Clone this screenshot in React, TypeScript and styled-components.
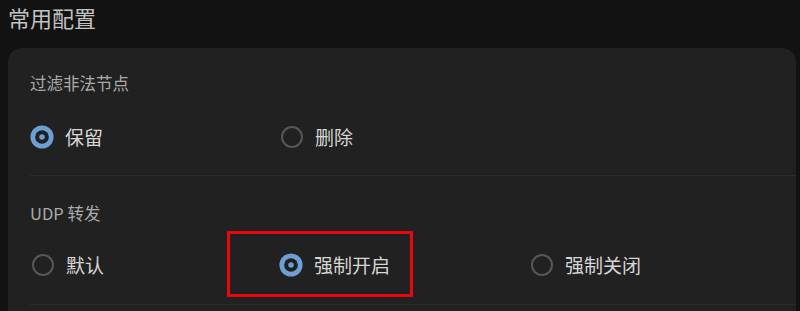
import React from "react";
import styled, { createGlobalStyle } from "styled-components";

const Global = createGlobalStyle`
  html, body { margin: 0; padding: 0; background: #121212; }
  body {
    font-family: "Noto Sans CJK SC", "Noto Sans", sans-serif;
    overflow: hidden;
  }
`;

const Page = styled.div`
  padding: 0 4px 0 8px;
  height: 311px;
  box-sizing: border-box;
`;

const Title = styled.h1`
  margin: 0;
  font-size: 22px;
  line-height: 35px;
  font-weight: 400;
  color: #c2c2c2;
`;

const Card = styled.div`
  margin-top: 13px;
  background: #212121;
  border-radius: 14px;
  padding-left: 22px;
  min-height: 300px;
`;

const Section = styled.section<{ $top: number; $gap: number; $bottom: number }>`
  padding: ${(p) => p.$top}px 0 ${(p) => p.$bottom}px;
  border-bottom: 1px solid #2c2c2c;
  display: flex;
  flex-direction: column;
  gap: ${(p) => p.$gap}px;
`;

const Label = styled.div`
  font-size: 16.5px;
  line-height: 24px;
  color: #ababab;
`;

const Options = styled.div`
  display: grid;
  grid-template-columns: repeat(3, 250px);
  height: 44px;
  align-items: center;
`;

const Option = styled.label<{ $shift?: number }>`
  position: relative;
  display: flex;
  align-items: center;
  gap: 11px;
  cursor: pointer;
  margin-left: ${(p) => p.$shift ?? 0}px;
`;

const RadioSlot = styled.span`
  width: 24px;
  height: 28px;
  display: flex;
  align-items: center;
  justify-content: center;
`;

const OptionText = styled.span`
  font-size: 19px;
  line-height: 28px;
  color: #d6d6d6;
`;

const Highlight = styled.span`
  position: absolute;
  left: -52px;
  top: -20px;
  width: 186px;
  height: 66px;
  box-sizing: border-box;
  border: 3px solid #e8080b;
  pointer-events: none;
`;

const RadioIcon: React.FC<{ checked: boolean }> = ({ checked }) =>
  checked ? (
    <svg width="28" height="28" viewBox="0 0 28 28">
      <circle cx="14" cy="14" r="13.5" fill="#6d9fd3" />
      <circle cx="14" cy="14" r="8" fill="#1f2022" />
      <circle cx="14" cy="14" r="3.2" fill="#6d9fd3" />
    </svg>
  ) : (
    <svg width="24" height="24" viewBox="0 0 24 24">
      <circle cx="12" cy="12" r="10" fill="none" stroke="#575757" strokeWidth="2" />
    </svg>
  );

type Opt = { text: string; checked?: boolean; highlight?: boolean; shift?: number };

const OptionItem: React.FC<Opt> = ({ text, checked = false, highlight, shift }) => (
  <Option $shift={shift}>
    <RadioSlot>
      <RadioIcon checked={checked} />
    </RadioSlot>
    <OptionText>{text}</OptionText>
    {highlight && <Highlight />}
  </Option>
);

export default function App() {
  return (
    <Page>
      <Global />
      <Title>常用配置</Title>
      <Card>
        <Section $top={23} $gap={20} $bottom={16}>
          <Label>过滤非法节点</Label>
          <Options>
            <OptionItem text="保留" checked />
            <OptionItem text="删除" />
          </Options>
        </Section>
        <Section $top={25} $gap={18} $bottom={17}>
          <Label>UDP 转发</Label>
          <Options>
            <OptionItem text="默认" shift={1} />
            <OptionItem text="强制开启" checked highlight shift={-1} />
            <OptionItem text="强制关闭" />
          </Options>
        </Section>
      </Card>
    </Page>
  );
}
